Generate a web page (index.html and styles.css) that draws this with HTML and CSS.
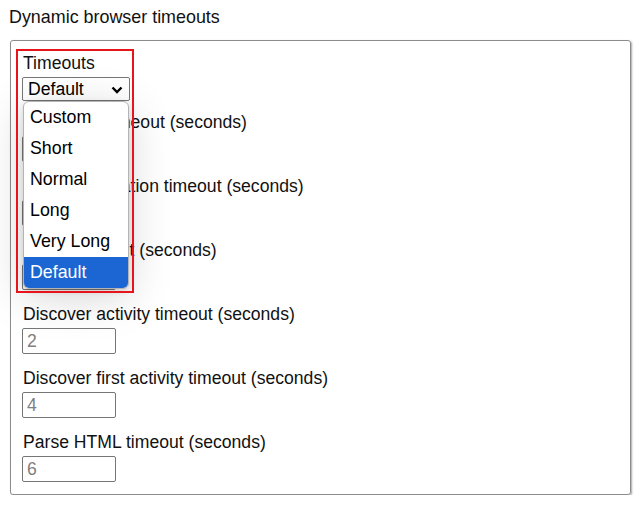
FILE: index.html
```html
<!DOCTYPE html>
<html>
<head>
<meta charset="utf-8">
<link rel="stylesheet" href="styles.css">
</head>
<body>
<div class="title">Dynamic browser timeouts</div>
<div class="panel">
  <div class="group group-first">
    <label class="lbl">Timeouts</label>
    <div class="select-wrap">
      <select class="sel">
        <option>Custom</option>
        <option>Short</option>
        <option>Normal</option>
        <option>Long</option>
        <option>Very Long</option>
        <option selected>Default</option>
      </select>
      <svg class="chev" width="12" height="8" viewBox="0 0 12 8"><path d="M1.5 1.5 L6 6 L10.5 1.5" fill="none" stroke="#000" stroke-width="2.4"/></svg>
    </div>
  </div>
  <div class="group">
    <label class="lbl">Page load timeout (seconds)</label>
    <input class="inp" type="text" placeholder="10">
  </div>
  <div class="group">
    <label class="lbl">Frame navigation timeout (seconds)</label>
    <input class="inp" type="text" placeholder="10">
  </div>
  <div class="group">
    <label class="lbl">Action timeout (seconds)</label>
    <input class="inp" type="text" placeholder="5">
  </div>
  <div class="group">
    <label class="lbl">Discover activity timeout (seconds)</label>
    <input class="inp" type="text" placeholder="2">
  </div>
  <div class="group">
    <label class="lbl">Discover first activity timeout (seconds)</label>
    <input class="inp" type="text" placeholder="4">
  </div>
  <div class="group group-last">
    <label class="lbl">Parse HTML timeout (seconds)</label>
    <input class="inp" type="text" placeholder="6">
  </div>

  <ul class="popup">
    <li class="opt">Custom</li>
    <li class="opt">Short</li>
    <li class="opt">Normal</li>
    <li class="opt">Long</li>
    <li class="opt">Very Long</li>
    <li class="opt opt-active">Default</li>
  </ul>
  <div class="highlight"></div>
</div>
</body>
</html>
```
FILE: styles.css
```css
html, body {
  margin: 0;
  padding: 0;
  background: #fff;
}
body {
  padding: 7px 0 0 9px;
  font-family: "Liberation Sans", Arial, sans-serif;
  font-size: 17.6px;
  color: #111;
}
.title {
  line-height: 20px;
  height: 20px;
  font-size: 17.9px;
}
.panel {
  position: relative;
  margin-top: 13px;
  margin-left: 1px;
  width: 621px;
  border: 1px solid #8c8c8c;
  border-radius: 3px;
  box-shadow: 1px 1px 2px rgba(0, 0, 0, 0.35);
  padding: 12px 11px 12px 11px;
  box-sizing: border-box;
}
.group {
  display: flex;
  flex-direction: column;
  align-items: flex-start;
  gap: 4px;
  margin-bottom: 14px;
}
.group-first {
  margin-bottom: 11px;
}
.group-last {
  margin-bottom: 0;
}
.lbl {
  display: block;
  line-height: 20px;
  height: 20px;
  padding-left: 1px;
}
.select-wrap {
  position: relative;
  width: 108px;
  height: 24px;
}
.sel {
  -webkit-appearance: none;
  appearance: none;
  width: 108px;
  height: 24px;
  box-sizing: border-box;
  border: 1px solid #767676;
  border-radius: 2px;
  background: #fff;
  font-family: "Liberation Sans", Arial, sans-serif;
  font-size: 17.6px;
  color: #000;
  padding: 0 0 0 5px;
  margin: 0;
  line-height: 22px;
}
.chev {
  position: absolute;
  right: 7px;
  top: 9px;
  pointer-events: none;
}
.inp {
  width: 94px;
  height: 26px;
  box-sizing: border-box;
  border: 1px solid #767676;
  border-radius: 2px;
  padding: 0 4px;
  margin: 0;
  font-family: "Liberation Sans", Arial, sans-serif;
  font-size: 17.6px;
  background: #fff;
}
.inp::placeholder {
  color: #808080;
}
.popup {
  position: absolute;
  left: 12px;
  top: 60px;
  width: 106px;
  margin: 0;
  padding: 0;
  list-style: none;
  background: #fff;
  border: 1px solid #b4b4b4;
  border-radius: 6px;
  overflow: hidden;
  box-sizing: border-box;
  box-shadow: 0 8px 44px rgba(0, 0, 0, 0.17), 0 2px 6px rgba(0, 0, 0, 0.12);
}
.opt {
  height: 31px;
  line-height: 31px;
  padding-left: 6px;
  color: #000;
  white-space: nowrap;
  font-size: 17.8px;
}
.opt-active {
  background: #1b66d2;
  color: #fff;
}
.highlight {
  position: absolute;
  left: 5px;
  top: 8px;
  width: 114px;
  height: 240px;
  border: 2px solid #e8141c;
  pointer-events: none;
}
```
